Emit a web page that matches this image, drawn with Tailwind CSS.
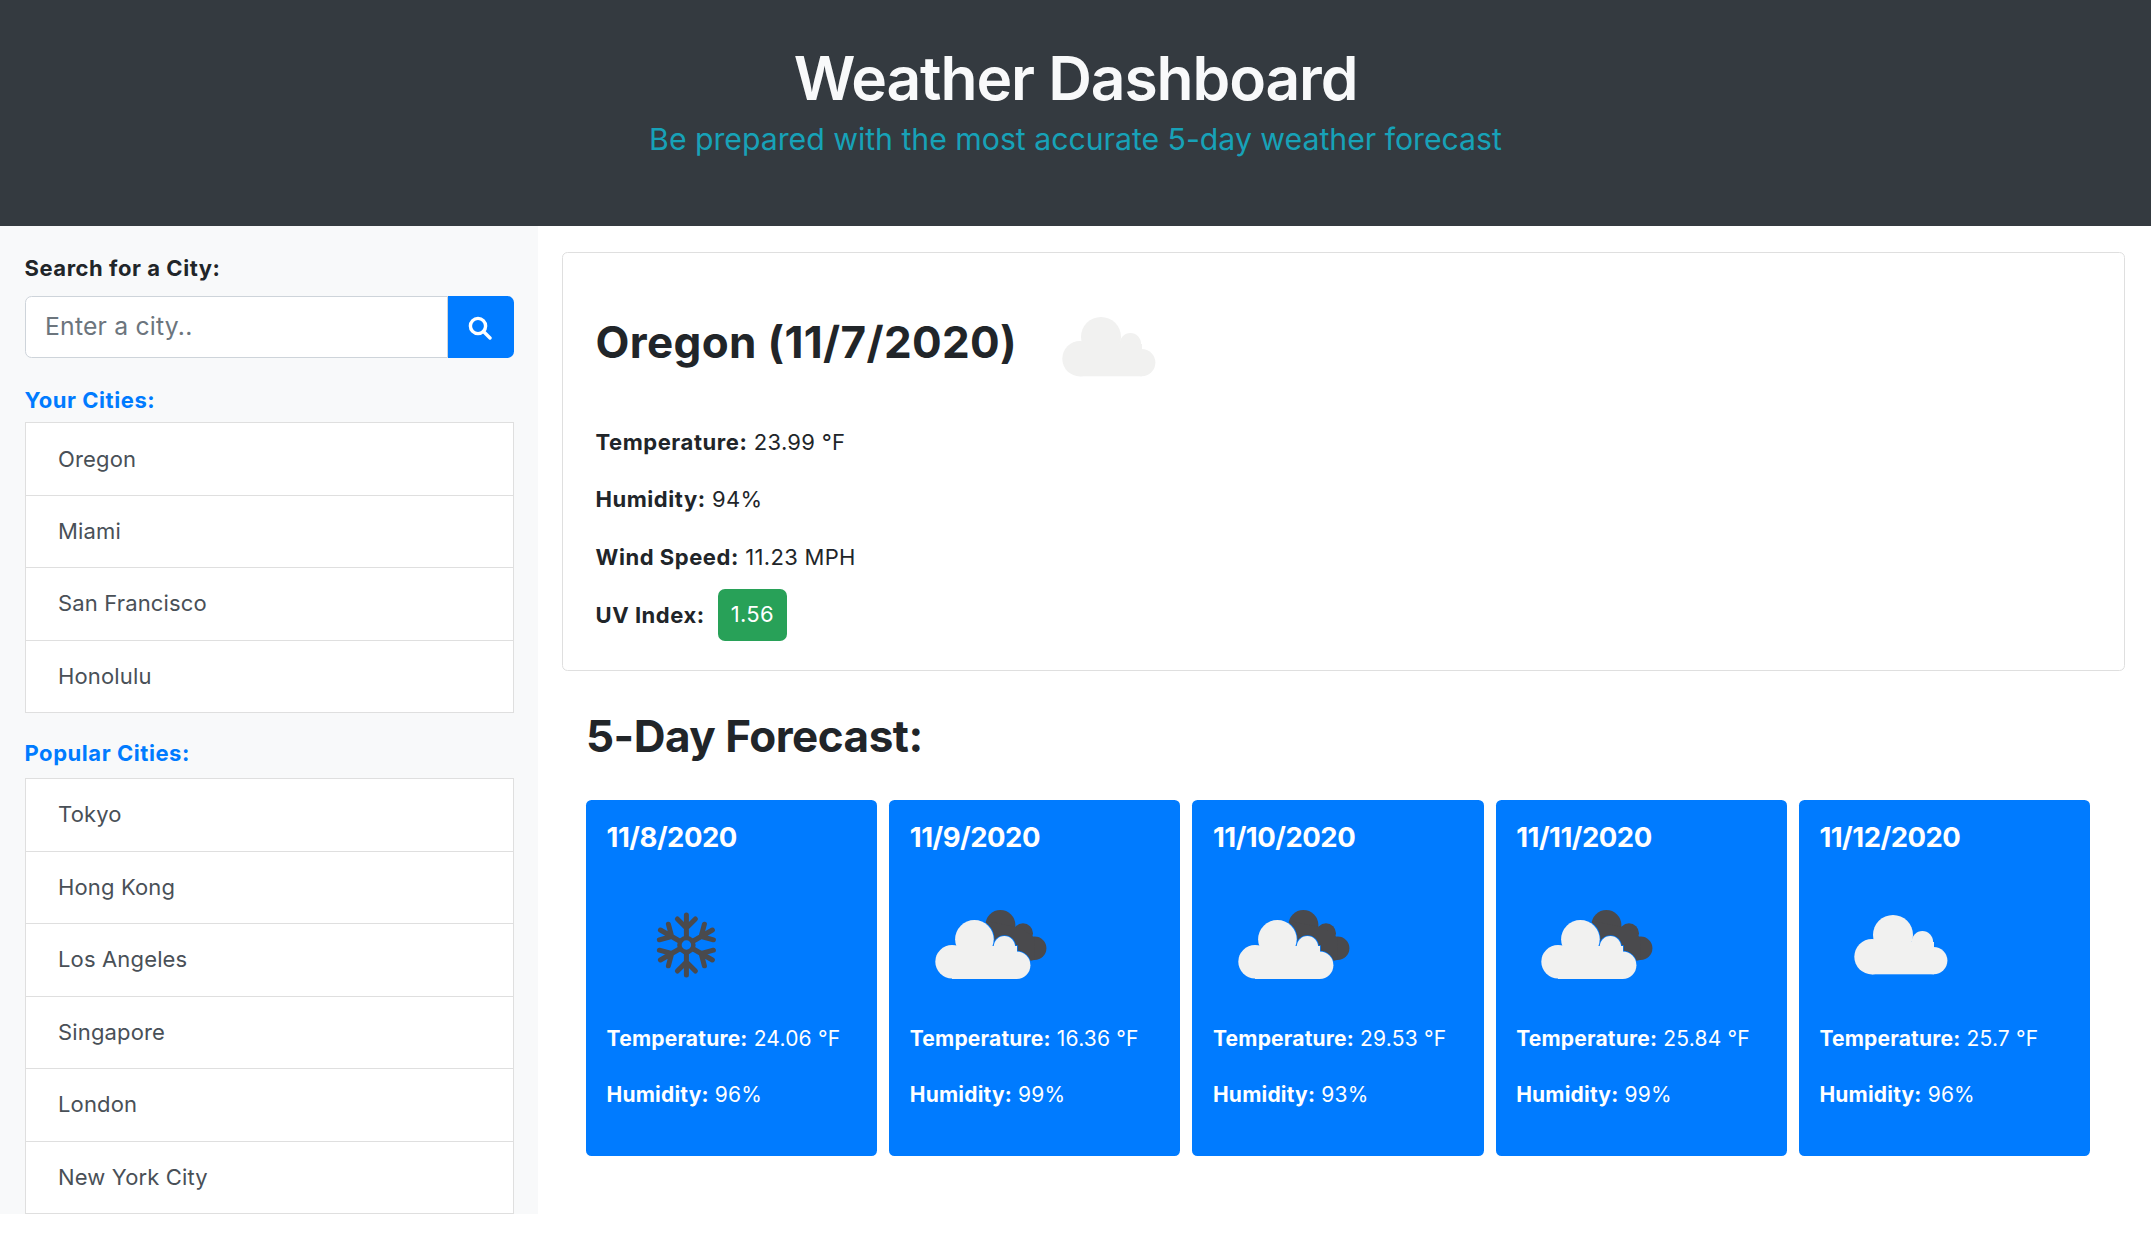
<!DOCTYPE html>
<html>
<head>
<meta charset="utf-8">
<script src="https://cdn.jsdelivr.net/npm/@tailwindcss/browser@4"></script>
<title>Weather Dashboard</title>
</head>
<body class="bg-white font-['Inter',sans-serif] text-[22px] tracking-[0.3px] text-[#212529] h-[1240px] w-[2151px] overflow-hidden">
<svg width="0" height="0" class="absolute">
  <defs>
    <g id="plain">
      <circle cx="74" cy="59" r="20"/><circle cx="103.4" cy="65.7" r="10.7"/><circle cx="53" cy="80.7" r="17.7"/><circle cx="114.7" cy="84.6" r="13.7"/><rect x="53" y="66" width="62" height="32.3"/>
    </g>
    <g id="white">
      <circle cx="65.4" cy="63.3" r="19.3"/><circle cx="95.4" cy="70.7" r="10.7"/><circle cx="43" cy="85.7" r="16.7"/><circle cx="107.7" cy="89.3" r="13.7"/><rect x="43" y="70" width="65" height="33"/>
    </g>
    <g id="broken">
      <g transform="translate(-1 0)">
      <g fill="#4a4a4d"><circle cx="91.4" cy="49" r="15"/><circle cx="114" cy="57.3" r="10"/><circle cx="125.7" cy="72.3" r="11.7"/><path d="M78 45 L112 52 L126 62 L125 84 L108 88 L80 70Z"/></g>
      <use href="#white" fill="#007bff" stroke="#007bff" stroke-width="1.5"/>
      <use href="#white" fill="#f1f1f0"/>
      </g>
    </g>
    <g id="arm" fill="none" stroke="#4a4a4d" stroke-width="5" stroke-linecap="round">
      <path d="M0 -9V-30M-9 -26L0 -17L9 -26"/>
    </g>
  </defs>
</svg>

<header class="h-[226px] bg-[#343a40] flex flex-col items-center pt-[42px]">
  <h1 class="text-[60.5px] leading-[72px] font-semibold tracking-[-1.1px] text-[#f8f9fa]">Weather Dashboard</h1>
  <p class="text-[30.25px] leading-[44px] mt-[3px] font-normal tracking-[-0.02px] text-[#17a2b8]">Be prepared with the most accurate 5-day weather forecast</p>
</header>

<div class="flex items-start">
  <aside class="w-[538px] h-[988px] bg-[#f8f9fa] px-[24.5px] pt-[26px] shrink-0">
    <label class="block font-bold tracking-[0.55px] leading-[33px] mb-[11px]">Search for a City:</label>
    <div class="flex h-[62px]">
      <div class="flex-1 bg-white border-[1.5px] border-[#ced4da] rounded-l-[6.5px] flex items-center pl-[19.5px] text-[#6c757d] text-[24.75px] tracking-[0.2px]">Enter a city..</div>
      <button class="w-[66px] bg-[#007bff] rounded-r-[6.5px] flex items-center justify-center pr-[1px] pt-[2px]">
        <svg width="24" height="24" viewBox="0 0 24 24" fill="none" stroke="#fff" stroke-width="3.4"><circle cx="10" cy="10" r="7.6"/><path d="M15.5 15.5L22 22" stroke-linecap="round"/></svg>
      </button>
    </div>
    <h6 class="mt-[26px] font-bold tracking-[0.55px] leading-[33px] text-[#007bff]">Your Cities:</h6>
    <ul class="mt-[5px] border-t-[1.4px] border-[#dfdfdf] tracking-[0.15px]">
      <li class="h-[72.5px] flex items-center pl-[32.5px] pt-[1px] bg-white border-x-[1.4px] border-b-[1.4px] border-[#dfdfdf] text-[#495057]">Oregon</li>
      <li class="h-[72.5px] flex items-center pl-[32.5px] pt-[1px] bg-white border-x-[1.4px] border-b-[1.4px] border-[#dfdfdf] text-[#495057]">Miami</li>
      <li class="h-[72.5px] flex items-center pl-[32.5px] bg-white border-x-[1.4px] border-b-[1.4px] border-[#dfdfdf] text-[#495057]">San Francisco</li>
      <li class="h-[72.5px] flex items-center pl-[32.5px] bg-white border-x-[1.4px] border-b-[1.4px] border-[#dfdfdf] text-[#495057]">Honolulu</li>
    </ul>
    <h6 class="mt-[24px] font-bold tracking-[0.55px] leading-[33px] text-[#007bff]">Popular Cities:</h6>
    <ul class="mt-[8px] border-t-[1.4px] border-[#dfdfdf] tracking-[0.15px]">
      <li class="h-[72.5px] flex items-center pl-[32.5px] bg-white border-x-[1.4px] border-b-[1.4px] border-[#dfdfdf] text-[#495057]">Tokyo</li>
      <li class="h-[72.5px] flex items-center pl-[32.5px] bg-white border-x-[1.4px] border-b-[1.4px] border-[#dfdfdf] text-[#495057]">Hong Kong</li>
      <li class="h-[72.5px] flex items-center pl-[32.5px] bg-white border-x-[1.4px] border-b-[1.4px] border-[#dfdfdf] text-[#495057]">Los Angeles</li>
      <li class="h-[72.5px] flex items-center pl-[32.5px] bg-white border-x-[1.4px] border-b-[1.4px] border-[#dfdfdf] text-[#495057]">Singapore</li>
      <li class="h-[72.5px] flex items-center pl-[32.5px] bg-white border-x-[1.4px] border-b-[1.4px] border-[#dfdfdf] text-[#495057]">London</li>
      <li class="h-[72.5px] flex items-center pl-[32.5px] bg-white border-x-[1.4px] border-b-[1.4px] border-[#dfdfdf] text-[#495057]">New York City</li>
    </ul>
  </aside>

  <main class="flex-1 min-w-0 pl-[24px] pr-[26px] pt-[26px]">
    <section class="h-[419px] border-[1.4px] border-[#dfdfdf] rounded-[5.5px] pl-[32.5px] pt-[24.6px]">
      <div class="flex items-start h-[136px]">
        <h2 class="text-[44px] leading-[53px] font-bold tracking-[0.35px] mt-[38px] w-[431.5px]">Oregon (11/7/2020)</h2>
        <svg width="138" height="138" viewBox="0 0 138 138" fill="#f1f1f0" class="shrink-0"><use href="#plain"/></svg>
      </div>
      <p class="h-[57.6px] flex items-center"><b class="font-bold tracking-[0.55px]">Temperature:</b>&nbsp;23.99 °F</p>
      <p class="h-[57.6px] flex items-center"><b class="font-bold tracking-[0.55px]">Humidity:</b>&nbsp;94%</p>
      <p class="h-[57.6px] flex items-center"><b class="font-bold tracking-[0.55px]">Wind Speed:</b>&nbsp;11.23 MPH</p>
      <p class="h-[57.6px] flex items-center"><b class="font-bold tracking-[0.55px]">UV Index:</b><span class="ml-[13px] h-[52px] px-[13px] mb-[1px] flex items-center bg-[#28a158] text-white rounded-[7px]">1.56</span></p>
    </section>

    <div class="pl-[24px] pr-[35px]">
      <h2 class="text-[44px] leading-[53px] font-bold tracking-[-0.5px] mt-[39px]">5-Day Forecast:</h2>
      <div class="grid grid-cols-5 gap-[12px] mt-[37px] text-white">
        <article class="h-[356px] bg-[#007bff] rounded-[5.5px] pl-[20.6px] pt-[21px]">
          <h5 class="text-[27.5px] leading-[33px] font-bold tracking-[-0.5px]">11/8/2020</h5>
          <svg width="138" height="138" viewBox="0 0 138 138" class="mt-[22px]"><g transform="translate(79.4 69)"><use href="#arm"/><use href="#arm" transform="rotate(60)"/><use href="#arm" transform="rotate(120)"/><use href="#arm" transform="rotate(180)"/><use href="#arm" transform="rotate(240)"/><use href="#arm" transform="rotate(300)"/><circle r="7" fill="none" stroke="#4a4a4d" stroke-width="4.5"/></g></svg>
          <p class="mt-[10px] text-[21px] leading-[29px] tracking-[0.2px] whitespace-nowrap"><b class="font-bold">Temperature:</b> 24.06 °F</p>
          <p class="mt-[27px] text-[21px] leading-[29px] tracking-[0.2px] whitespace-nowrap"><b class="font-bold">Humidity:</b> 96%</p>
        </article>
        <article class="h-[356px] bg-[#007bff] rounded-[5.5px] pl-[20.6px] pt-[21px]">
          <h5 class="text-[27.5px] leading-[33px] font-bold tracking-[-0.5px]">11/9/2020</h5>
          <svg width="138" height="138" viewBox="0 0 138 138" class="mt-[22px]"><use href="#broken"/></svg>
          <p class="mt-[10px] text-[21px] leading-[29px] tracking-[0.2px] whitespace-nowrap"><b class="font-bold">Temperature:</b> 16.36 °F</p>
          <p class="mt-[27px] text-[21px] leading-[29px] tracking-[0.2px] whitespace-nowrap"><b class="font-bold">Humidity:</b> 99%</p>
        </article>
        <article class="h-[356px] bg-[#007bff] rounded-[5.5px] pl-[20.6px] pt-[21px]">
          <h5 class="text-[27.5px] leading-[33px] font-bold tracking-[-0.5px]">11/10/2020</h5>
          <svg width="138" height="138" viewBox="0 0 138 138" class="mt-[22px]"><use href="#broken"/></svg>
          <p class="mt-[10px] text-[21px] leading-[29px] tracking-[0.2px] whitespace-nowrap"><b class="font-bold">Temperature:</b> 29.53 °F</p>
          <p class="mt-[27px] text-[21px] leading-[29px] tracking-[0.2px] whitespace-nowrap"><b class="font-bold">Humidity:</b> 93%</p>
        </article>
        <article class="h-[356px] bg-[#007bff] rounded-[5.5px] pl-[20.6px] pt-[21px]">
          <h5 class="text-[27.5px] leading-[33px] font-bold tracking-[-0.5px]">11/11/2020</h5>
          <svg width="138" height="138" viewBox="0 0 138 138" class="mt-[22px]"><use href="#broken"/></svg>
          <p class="mt-[10px] text-[21px] leading-[29px] tracking-[0.2px] whitespace-nowrap"><b class="font-bold">Temperature:</b> 25.84 °F</p>
          <p class="mt-[27px] text-[21px] leading-[29px] tracking-[0.2px] whitespace-nowrap"><b class="font-bold">Humidity:</b> 99%</p>
        </article>
        <article class="h-[356px] bg-[#007bff] rounded-[5.5px] pl-[20.6px] pt-[21px]">
          <h5 class="text-[27.5px] leading-[33px] font-bold tracking-[-0.5px]">11/12/2020</h5>
          <svg width="138" height="138" viewBox="0 0 138 138" class="mt-[22px]" fill="#f1f1f0"><use href="#plain"/></svg>
          <p class="mt-[10px] text-[21px] leading-[29px] tracking-[0.2px] whitespace-nowrap"><b class="font-bold">Temperature:</b> 25.7 °F</p>
          <p class="mt-[27px] text-[21px] leading-[29px] tracking-[0.2px] whitespace-nowrap"><b class="font-bold">Humidity:</b> 96%</p>
        </article>
      </div>
    </div>
  </main>
</div>
</body>
</html>
